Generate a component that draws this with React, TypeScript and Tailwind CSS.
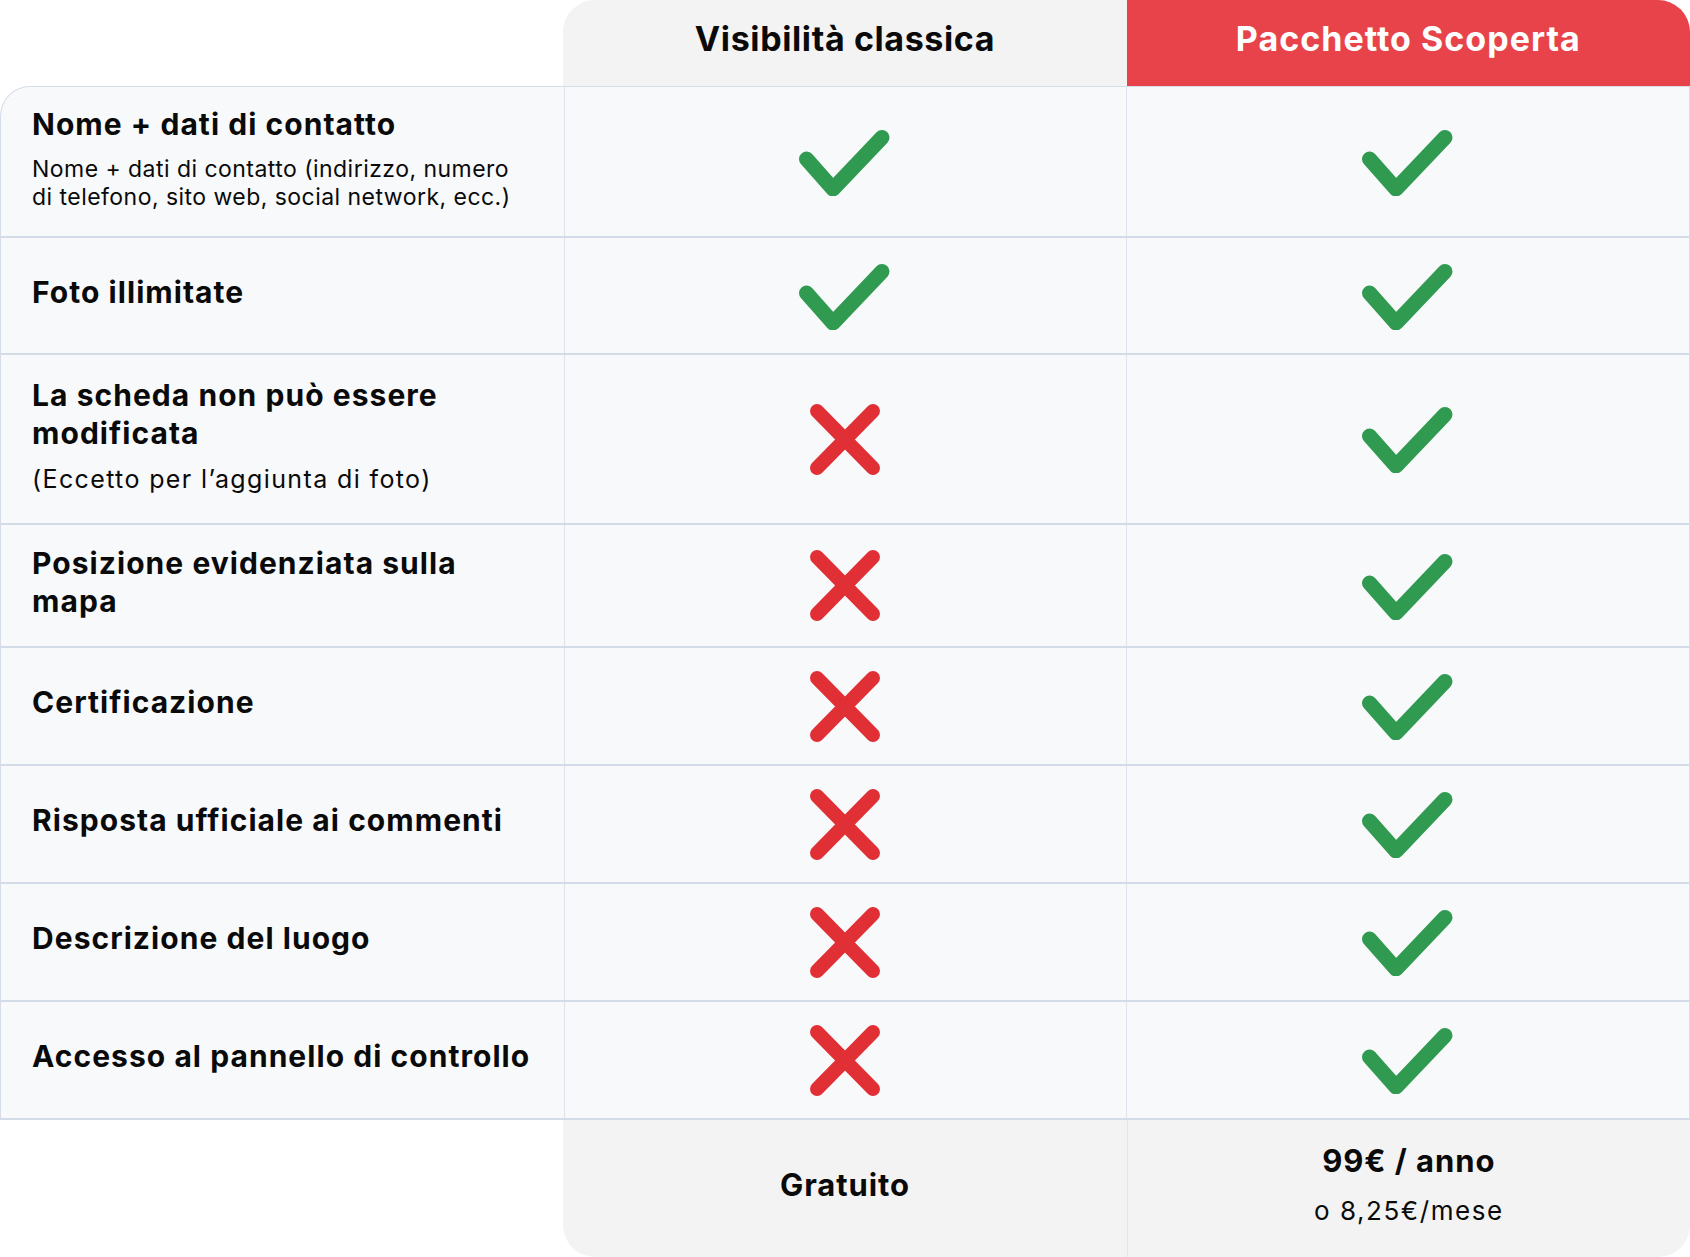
import React from "react";

type Row = {
  title: React.ReactNode;
  sub?: React.ReactNode;
  subSize?: string;
  classic: boolean;
  h: string;
};

const rows: Row[] = [
  {
    title: "Nome + dati di contatto",
    sub: (
      <>
        Nome + dati di contatto (indirizzo, numero
        <br />
        di telefono, sito web, social network, ecc.)
      </>
    ),
    subSize: "text-[23px] leading-[28px] tracking-[0.02em]",
    classic: true,
    h: "h-[151px]",
  },
  { title: "Foto illimitate", classic: true, h: "h-[117px]" },
  {
    title: (
      <>
        La scheda non può essere
        <br />
        modificata
      </>
    ),
    sub: "(Eccetto per l’aggiunta di foto)",
    subSize: "text-[25px] leading-[30px] tracking-[0.055em]",
    classic: false,
    h: "h-[170px]",
  },
  {
    title: (
      <>
        Posizione evidenziata sulla
        <br />
        mapa
      </>
    ),
    classic: false,
    h: "h-[123px]",
  },
  { title: "Certificazione", classic: false, h: "h-[118px]" },
  { title: "Risposta ufficiale ai commenti", classic: false, h: "h-[118px]" },
  { title: "Descrizione del luogo", classic: false, h: "h-[118px]" },
  { title: "Accesso al pannello di controllo", classic: false, h: "h-[118px]" },
];

function Check() {
  return (
    <svg width="94" height="68" viewBox="0 0 94 68" fill="none">
      <path
        d="M8.5 31 L35 61 L84 9.5"
        stroke="#2f9a50"
        strokeWidth="15"
        strokeLinecap="round"
        strokeLinejoin="round"
      />
    </svg>
  );
}

function Cross() {
  return (
    <svg width="70" height="71" viewBox="0 0 70 71" fill="none">
      <path
        d="M7 7 L63 64 M63 7 L7 64"
        stroke="#e12f36"
        strokeWidth="14"
        strokeLinecap="round"
      />
    </svg>
  );
}

export default function App() {
  return (
    <div className="w-[1690px] h-[1257px] bg-white text-[#0a0a0a] font-['Inter',sans-serif]">
      {/* header */}
      <div className="grid grid-cols-3 h-[86px]">
        <div />
        <div className="bg-[#f3f3f3] rounded-tl-[32px] flex items-center justify-center pb-[10px] text-[34px] font-bold tracking-[0.018em]">
          Visibilità classica
        </div>
        <div className="bg-[#e8434a] rounded-tr-[32px] flex items-center justify-center pb-[10px] text-[34px] font-bold tracking-[0.03em] text-white">
          Pacchetto Scoperta
        </div>
      </div>

      {/* body */}
      <div className="border border-b-0 border-[#d5dde8] rounded-tl-[30px] overflow-hidden bg-[#f8f9fb]">
        {rows.map((r, i) => (
          <div key={i} className={`grid grid-cols-3 border-b-2 border-[#d3dbe6] ${r.h}`}>
            <div className="flex flex-col justify-center pl-[31px] pb-2">
              <div className="text-[30px] leading-[38px] font-bold tracking-[0.035em]">{r.title}</div>
              {r.sub && <div className={`mt-[12px] ${r.subSize}`}>{r.sub}</div>}
            </div>
            <div className="flex items-center justify-center border-l border-[#dde3ec]">
              {r.classic ? <Check /> : <Cross />}
            </div>
            <div className="flex items-center justify-center border-l border-[#dde3ec]">
              <Check />
            </div>
          </div>
        ))}
      </div>

      {/* footer */}
      <div className="grid grid-cols-3 h-[137px]">
        <div />
        <div className="bg-[#f3f3f3] rounded-bl-[32px] flex items-center justify-center pb-[6px] text-[31px] font-bold tracking-[0.03em]">
          Gratuito
        </div>
        <div className="bg-[#f3f3f3] rounded-br-[32px] border-l border-[#e3e6ea] flex flex-col items-center justify-center pb-[9px]">
          <div className="text-[31px] leading-[38px] font-bold tracking-[0.03em]">99€ / anno</div>
          <div className="text-[26px] leading-[30px] mt-[16px] tracking-[0.06em]">o 8,25€/mese</div>
        </div>
      </div>
    </div>
  );
}
